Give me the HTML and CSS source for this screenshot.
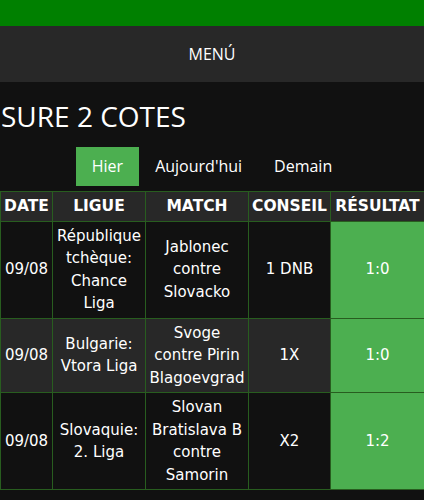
FILE: index.html
```html
<!DOCTYPE html>
<html lang="fr">
<head>
<meta charset="utf-8">
<title>Sure 2 cotes</title>
<link rel="stylesheet" href="styles.css">
</head>
<body>
<div class="topbar"></div>
<nav class="menubar">MENÚ</nav>
<h1 class="title">SURE 2 COTES</h1>
<div class="tabs">
  <span class="tab active">Hier</span>
  <span class="tab">Aujourd'hui</span>
  <span class="tab">Demain</span>
</div>
<table class="tips">
  <colgroup>
    <col class="c-date"><col class="c-league"><col class="c-match"><col class="c-tip"><col class="c-result">
  </colgroup>
  <thead>
    <tr><th>DATE</th><th>LIGUE</th><th>MATCH</th><th>CONSEIL</th><th>RÉSULTAT</th></tr>
  </thead>
  <tbody>
    <tr>
      <td>09/08</td>
      <td>République tchèque: Chance Liga</td>
      <td>Jablonec contre Slovacko</td>
      <td>1 DNB</td>
      <td class="result">1:0</td>
    </tr>
    <tr class="alt">
      <td>09/08</td>
      <td>Bulgarie: Vtora Liga</td>
      <td>Svoge contre Pirin Blagoevgrad</td>
      <td>1X</td>
      <td class="result">1:0</td>
    </tr>
    <tr>
      <td>09/08</td>
      <td>Slovaquie: 2. Liga</td>
      <td>Slovan Bratislava B contre Samorin</td>
      <td>X2</td>
      <td class="result">1:2</td>
    </tr>
  </tbody>
</table>
</body>
</html>
```
FILE: styles.css
```css
html, body {
  margin: 0;
  padding: 0;
  background: #111111;
  color: #ffffff;
  font-family: "Open Sans", "Noto Sans", sans-serif;
}
.topbar {
  height: 26px;
  background: #008000;
}
.menubar {
  height: 56px;
  background: #282828;
  display: flex;
  align-items: center;
  justify-content: center;
  font-size: 16px;
}
.title {
  margin: 0;
  padding: 14px 0 0 1px;
  font-size: 28px;
  font-weight: 400;
  line-height: 40px;
}
.tabs {
  display: flex;
  justify-content: center;
  margin-top: 11px;
}
.tab {
  padding: 0 16px;
  height: 39px;
  line-height: 39px;
  font-size: 16px;
}
.tab.active {
  background: #4caf50;
}
.tips {
  width: 100%;
  margin-top: 5px;
  border-collapse: collapse;
  table-layout: fixed;
  font-family: "DejaVu Sans", Verdana, sans-serif;
  font-size: 15px;
  line-height: 22.5px;
}
.c-date { width: 52px; }
.c-league { width: 93px; }
.c-match { width: 103px; }
.c-tip { width: 82px; }
.c-result { width: 94px; }
.tips th, .tips td {
  border: 1px solid #285d1f;
  padding: 3px 3px;
  text-align: center;
  vertical-align: middle;
}
.tips th {
  background: #282828;
  font-weight: 700;
  font-size: 15.5px;
  padding: 3px 0;
}
.tips td:first-child {
  padding: 3px 0;
}
.tips tr.alt td {
  background: #282828;
}
.tips td.result, .tips tr.alt td.result {
  background: #4caf50;
}
```
